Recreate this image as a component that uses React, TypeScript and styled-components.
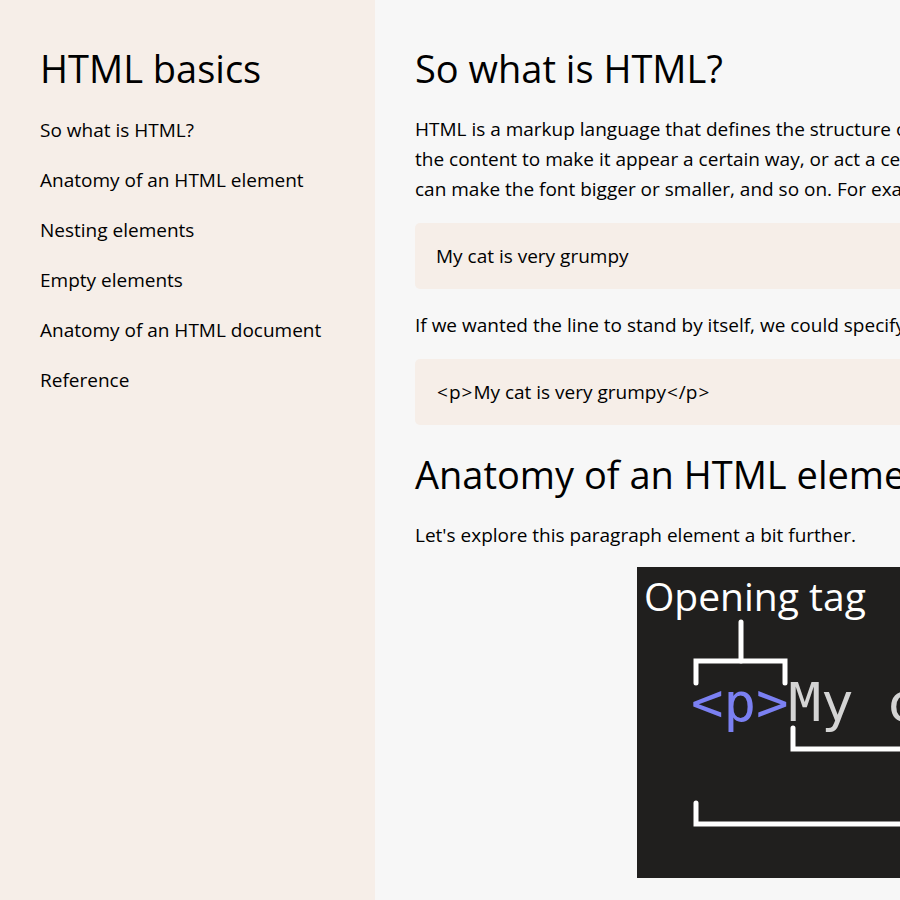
import React from "react";
import styled, { createGlobalStyle } from "styled-components";

const Global = createGlobalStyle`
  html, body { margin: 0; padding: 0; }
  body {
    width: 900px;
    height: 900px;
    overflow: hidden;
    font-family: "Open Sans", "Noto Sans", sans-serif;
    color: #000;
    background: #f7f7f7;
  }
`;

const Page = styled.div`
  display: flex;
  min-height: 900px;
`;

const Sidebar = styled.nav`
  flex: 0 0 375px;
  box-sizing: border-box;
  background: #f6eee8;
  padding: 44px 40px 40px 40px;
`;

const Title = styled.h1`
  margin: 0 0 23px 0;
  font-size: 38px;
  font-weight: 400;
  line-height: 48px;
`;

const NavList = styled.ul`
  list-style: none;
  margin: 0;
  padding: 0;
  display: flex;
  flex-direction: column;
  gap: 20px;
`;

const NavItem = styled.li`
  font-size: 19px;
  line-height: 30px;
  white-space: nowrap;
`;

const Main = styled.main`
  flex: 1 0 auto;
  padding: 44px 40px 40px 40px;
  min-width: 0;
`;

const Heading = styled.h2<{ $top?: number }>`
  margin: ${(p) => p.$top ?? 0}px 0 22px 0;
  font-size: 38px;
  font-weight: 400;
  line-height: 48px;
  white-space: nowrap;
`;

const Para = styled.p`
  margin: 0 0 19px 0;
  font-size: 19px;
  line-height: 30px;
  white-space: nowrap;
`;

const CodeBox = styled.div`
  width: 1400px;
  box-sizing: border-box;
  background: #f6eee8;
  border-radius: 5px;
  padding: 18px 20px 18px 21px;
  margin: 0 0 21px 0;
  font-size: 19px;
  line-height: 30px;
  white-space: nowrap;
`;

const Angle = styled.span`
  margin: 0 1px;
`;

const Figure = styled.figure`
  margin: -2px 0 0 222px;
  width: 700px;
  height: 311px;
  background: #201f1e;
`;

const Diagram = () => (
  <svg width="700" height="311" viewBox="0 0 700 311">
    <text
      x="7"
      y="44"
      fill="#ffffff"
      fontFamily="'Open Sans', sans-serif"
      fontSize="39"
    >
      Opening tag
    </text>
    <g stroke="#ffffff" strokeWidth="5" strokeLinecap="round" fill="none">
      <path d="M104 55 V94" />
      <path d="M59 116 V94 H148 V116" />
      <path d="M156 161 V182 H700" />
      <path d="M59 236 V257 H700" />
    </g>
    <text
      x="54"
      y="154"
      fontFamily="'DejaVu Sans Mono', monospace"
      fontSize="54"
    >
      <tspan fill="#7b80f2">&lt;p&gt;</tspan>
      <tspan fill="#d4d4d4">My cat is very grumpy</tspan>
      <tspan fill="#7b80f2">&lt;/p&gt;</tspan>
    </text>
  </svg>
);

const navItems = [
  "So what is HTML?",
  "Anatomy of an HTML element",
  "Nesting elements",
  "Empty elements",
  "Anatomy of an HTML document",
  "Reference",
];

export default function App() {
  return (
    <>
      <Global />
      <Page>
        <Sidebar>
          <Title>HTML basics</Title>
          <NavList>
            {navItems.map((t) => (
              <NavItem key={t}>{t}</NavItem>
            ))}
          </NavList>
        </Sidebar>
        <Main>
          <Heading>So what is HTML?</Heading>
          <Para>
            HTML is a markup language that defines the structure of your content. HTML consists of a series of elements, which you use to enclose, or wrap, different parts of
            <br />
            the content to make it appear a certain way, or act a certain way. The enclosing tags can make a word or image hyperlink to somewhere else, can italicize words, and
            <br />
            can make the font bigger or smaller, and so on. For example, take the following line of content:
          </Para>
          <CodeBox>My cat is very grumpy</CodeBox>
          <Para>
            If we wanted the line to stand by itself, we could specify that it is a paragraph by enclosing it in paragraph tags:
          </Para>
          <CodeBox>
            <Angle>&lt;</Angle>p<Angle>&gt;</Angle>My cat is very grumpy<Angle>&lt;</Angle>/p<Angle>&gt;</Angle>
          </CodeBox>
          <Heading $top={25}>Anatomy of an HTML element</Heading>
          <Para>Let's explore this paragraph element a bit further.</Para>
          <Figure>
            <Diagram />
          </Figure>
        </Main>
      </Page>
    </>
  );
}
